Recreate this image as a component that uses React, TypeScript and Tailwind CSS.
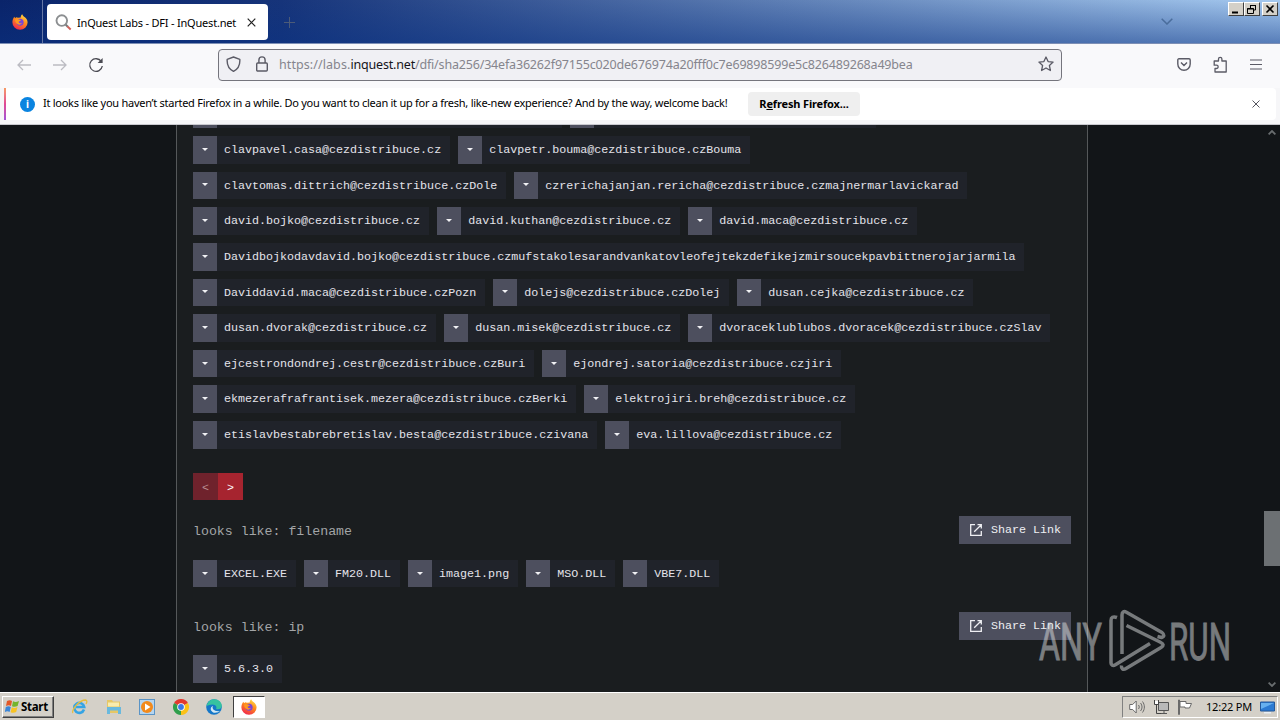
import type { ReactNode } from 'react';

const emailRows = [
  ['clavpavel.casa@cezdistribuce.cz', 'clavpetr.bouma@cezdistribuce.czBouma'],
  [
    'clavtomas.dittrich@cezdistribuce.czDole',
    'czrerichajanjan.rericha@cezdistribuce.czmajnermarlavickarad',
  ],
  ['david.bojko@cezdistribuce.cz', 'david.kuthan@cezdistribuce.cz', 'david.maca@cezdistribuce.cz'],
  [
    'Davidbojkodavdavid.bojko@cezdistribuce.czmufstakolesarandvankatovleofejtekzdefikejzmirsoucekpavbittnerojarjarmila',
  ],
  ['Daviddavid.maca@cezdistribuce.czPozn', 'dolejs@cezdistribuce.czDolej', 'dusan.cejka@cezdistribuce.cz'],
  ['dusan.dvorak@cezdistribuce.cz', 'dusan.misek@cezdistribuce.cz', 'dvoraceklublubos.dvoracek@cezdistribuce.czSlav'],
  ['ejcestrondondrej.cestr@cezdistribuce.czBuri', 'ejondrej.satoria@cezdistribuce.czjiri'],
  ['ekmezerafrafrantisek.mezera@cezdistribuce.czBerki', 'elektrojiri.breh@cezdistribuce.cz'],
  ['etislavbestabrebretislav.besta@cezdistribuce.czivana', 'eva.lillova@cezdistribuce.cz'],
];

const files = ['EXCEL.EXE', 'FM20.DLL', 'image1.png', 'MSO.DLL', 'VBE7.DLL'];

function Chip({ children }: { children: ReactNode }) {
  return (
    <div className="flex h-full shrink-0 bg-[#20232a]">
      <button className="flex w-6 items-center justify-center bg-[#4d4f5e]">
        <svg width="6" height="3" viewBox="0 0 6 3" className="mb-px">
          <path d="M0 0h6L3 3z" fill="#f1f1f4" />
        </svg>
      </button>
      <span className="flex items-center whitespace-pre pl-[7px] pr-[9px] pt-0.5 text-[11.680px] leading-none text-[#e4e4ea]">
        {children}
      </span>
    </div>
  );
}

function ChipRow({ items }: { items: string[] }) {
  return (
    <div className="flex h-[27.65px] gap-2">
      {items.map((item) => (
        <Chip key={item}>{item}</Chip>
      ))}
    </div>
  );
}

function SectionHeader({ title }: { title: string }) {
  return (
    <div className="flex h-[28px] items-center justify-between">
      <h2 className="whitespace-pre pt-[3px] text-[13.25px] leading-none text-[#a3a5a7]">{title}</h2>
      <button className="flex h-full w-[112px] items-center bg-[#4d4f5e] pl-[11px] text-[11.680px] text-[#efeff3]">
        <svg width="12" height="12" viewBox="0 0 12 12" fill="none" stroke="currentColor" strokeWidth="1.3" className="mr-[9px]">
          <path d="M5 .7H.7v10.6h10.6V7M7.5.7h3.8v3.8M11.3.7 4.2 7.8" />
        </svg>
        <span className="pt-0.5">Share Link</span>
      </button>
    </div>
  );
}

function FirefoxIcon({ size }: { size: number }) {
  return (
    <svg width={size} height={size} viewBox="0 0 16 16">
      <defs>
        <linearGradient id="fox" x1=".8" y1="0" x2=".3" y2="1">
          <stop offset="0" stopColor="#ffe14a" />
          <stop offset=".45" stopColor="#ff8a1c" />
          <stop offset="1" stopColor="#f0254f" />
        </linearGradient>
      </defs>
      <path
        d="M10.2.3c.3 1.2 1.3 1.9 2.3 2.8 1.8 1.4 3.1 3 3.1 5.4A7.6 7.4 0 1 1 .4 8.300C.4 6 1.200 4 2.500 2.700l.5 1.600 1.300-1 1.600.5 2.800-.4C8.800 2 9.400.9 10.200.3z"
        fill="url(#fox)"
      />
      <circle cx="8.100" cy="8.300" r="3.500" fill="#7a45d8" />
      <path d="M3 5.500c1.500-.9 3.300-.7 4.600.3l1.400.4c-.5.900-1.700.9-2.400 1.500.2 1.400 2 2 3.400 1.100-.8 2-3.700 2.500-5.300.8C3.600 8.500 3 7 3 5.500z" fill="#ff9a20" />
    </svg>
  );
}

function TitleBar() {
  return (
    <div className="flex h-[44px] border-b border-[#7d8fb5] bg-[linear-gradient(to_bottom,rgba(10,36,106,0)_0%,rgba(10,50,130,0.5)_100%),linear-gradient(to_right,#0a246a_0%,#16347a_22%,#a6caf0_100%)]">
      <div className="flex w-[43px] items-center border-r border-[#6577a5] pl-3">
        <FirefoxIcon size={16} />
      </div>
      <div className="ml-1 mt-1 flex h-9 w-[221px] items-center rounded bg-white pl-2">
        <svg width="17" height="17" viewBox="0 0 17 17" fill="none">
          <circle cx="6.800" cy="6.600" r="5.300" stroke="#8c8f91" strokeWidth="1.900" />
          <path d="m10.800 10.800 2 2" stroke="#777" strokeWidth="2" />
          <path d="m12.500 12.500 3.200 3" stroke="#d1605a" strokeWidth="2" />
        </svg>
        <span className="ml-[5px] w-[165px] whitespace-nowrap pt-0.5 font-['Noto_Sans'] text-[11px] tracking-[-0.2px] text-black">
          InQuest Labs - DFI - InQuest.net
        </span>
        <svg width="9" height="9" viewBox="0 0 9 9" className="ml-[5px]" stroke="#222" strokeWidth="1.200">
          <path d="m.7.7 7.600 7.600M8.300.7.7 8.300" />
        </svg>
      </div>
      <svg width="11" height="11" viewBox="0 0 11 11" className="ml-4 mt-[17px]" stroke="#4c5b78">
        <path d="M5.500 0v11M0 5.500h11" />
      </svg>
      <svg width="12" height="7" viewBox="0 0 12 7" className="ml-auto mr-[55px] mt-[18px]" fill="none" stroke="#4a6d9c" strokeWidth="1.500">
        <path d="m.7.7 5.300 5.300L11.300.7" />
      </svg>
      <div className="mr-0.5 mt-0.5 flex h-[14px]">
        <WindowButton>
          <path d="M3 9.500h6" strokeWidth="2" />
        </WindowButton>
        <WindowButton>
          <path d="M5 2.500h6M5.500 2v3M10.500 2v5H9M2.500 5.500h6v5h-6zM2 6h7" />
        </WindowButton>
        <div className="w-0.5" />
        <WindowButton>
          <path d="m3.500 2.500 7 7M10.500 2.500l-7 7" strokeWidth="1.600" />
        </WindowButton>
      </div>
    </div>
  );
}

function WindowButton({ children }: { children: ReactNode }) {
  return (
    <button className="h-[14px] w-4 border border-b-[#404040] border-l-white border-r-[#404040] border-t-white bg-[#d4d0c8]">
      <svg width="14" height="12" viewBox="0 0 14 12" fill="none" stroke="#000">
        {children}
      </svg>
    </button>
  );
}

function Toolbar() {
  return (
    <div className="flex h-11 items-center bg-[#f9f9fb] text-[#5b5b66]">
      <svg width="14" height="12" viewBox="0 0 14 12" className="-mt-0.5 ml-[17px]" fill="none" stroke="#bcbcc2" strokeWidth="1.300">
        <path d="M14 6H1M6 1 1 6l5 5" />
      </svg>
      <svg width="14" height="12" viewBox="0 0 14 12" className="-mt-0.5 ml-[22px]" fill="none" stroke="#bcbcc2" strokeWidth="1.300">
        <path d="M0 6h13M8 1l5 5-5 5" />
      </svg>
      <svg width="16" height="16" viewBox="0 0 16 16" className="-mt-0.5 ml-[21px]" fill="none" stroke="#4a4a52" strokeWidth="1.300">
        <path d="M13.300 4.500A6.300 6.300 0 1 0 14.300 9" />
        <path d="M14.600 1v5h-5z" fill="#4a4a52" stroke="none" />
      </svg>
      <div className="-mt-0.5 ml-[114px] flex h-8 w-[844px] items-center rounded border border-[#75757d] bg-[#f0f0f4]">
        <svg width="15" height="17" viewBox="0 0 15 17" className="-mt-px ml-[7px]" fill="none" stroke="currentColor" strokeWidth="1.400">
          <path d="M7.500 1 13.800 3.300c.4 5.500-1.600 9.700-6.300 12C2.800 13 .8 8.800 1.200 3.300z" strokeLinejoin="round" />
        </svg>
        <svg width="12" height="16" viewBox="0 0 12 16" className="-mt-0.5 ml-[15px]" fill="none" stroke="currentColor" strokeWidth="1.400">
          <rect x=".7" y="7" width="10.600" height="8" rx="1" />
          <path d="M2.900 7V4a3.100 3.100 0 0 1 6.200 0v3" />
        </svg>
        <span className="ml-[11px] w-[759px] whitespace-nowrap font-['Noto_Sans'] text-[12.500px] tracking-[-0.18px] text-[#85858d]">
          <span className="tracking-[0.08px]">https://labs.</span>
          <span className="text-[#15141a]">inquest.net</span>
          /dfi/sha256/34efa36262f97155c020de676974a20fff0c7e69898599e5c826489268a49bea
        </span>
        <svg width="16" height="16" viewBox="0 0 16 16" className="-mt-0.5" fill="none" stroke="currentColor" strokeWidth="1.300" strokeLinejoin="round">
          <path d="m8 1 2.100 4.600 5 .5-3.700 3.400 1 5L8 12l-4.400 2.500 1-5L.9 6.100l5-.5z" />
        </svg>
      </div>
      <svg width="14" height="13" viewBox="0 0 14 13" className="-mt-1 ml-[115px]" fill="none" stroke="currentColor" strokeWidth="1.400">
        <path d="M2 .8h10c.8 0 1.200.5 1.200 1.200V6a6.200 6.200 0 0 1-12.400 0V2C.8 1.300 1.200.8 2 .8zM4 4.500l3 3 3-3" />
      </svg>
      <svg width="15" height="17" viewBox="0 0 15 17" className="-mt-1 ml-[22px]" fill="none" stroke="currentColor" strokeWidth="1.300" strokeLinejoin="round">
        <path d="M2 16V12.500h1.500a1.600 1.600 0 0 0 0-3.300H1.200V5H5.500V3a1.700 1.700 0 0 1 3.400 0v2h4.300v11z" />
      </svg>
      <svg width="12" height="11" viewBox="0 0 12 11" className="-mt-1 ml-[22px]" stroke="currentColor" strokeWidth="1.200">
        <path d="M0 1h12M0 5.500h12M0 10h12" />
      </svg>
    </div>
  );
}

function Notification() {
  return (
    <div className="h-[37px] border-b border-[#c9c9cf] bg-[#f6f6f8] pl-1 pr-1">
      <div className="flex h-8 items-center rounded bg-white font-['Noto_Sans'] text-black">
        <div className="h-full w-0.5 bg-gradient-to-b from-[#f79a62] via-[#e04794] to-[#a352d6]" />
        <div className="ml-[14px] flex size-[15px] items-center justify-center rounded-full bg-[#0a84e0] text-[10px] font-bold leading-none text-white">
          i
        </div>
        <p className="-mt-px ml-2 w-[705px] whitespace-nowrap text-[11px] tracking-[-0.265px]">
          It looks like you haven’t started Firefox in a while. Do you want to clean it up for a fresh, like-new experience? And by the way, welcome back!
        </p>
        <button className="h-6 w-[112px] rounded bg-[#efefef] text-[11px] font-bold tracking-[-0.15px]">
          R<span className="underline">e</span>fresh Firefox...
        </button>
        <svg width="8" height="8" viewBox="0 0 8 8" className="ml-auto mr-4" stroke="#55555e">
          <path d="m.5.5 7 7M7.500.5l-7 7" />
        </svg>
      </div>
    </div>
  );
}

function Watermark() {
  return (
    <svg
      width="200"
      height="80"
      viewBox="0 0 200 80"
      className="absolute left-[1035px] top-[480px] overflow-visible opacity-50"
      fill="#dcdfe0"
      stroke="#dcdfe0"
      fontFamily="Roboto, sans-serif"
      fontSize="52"
    >
      <text x="4" y="54.500" textLength="63" lengthAdjust="spacingAndGlyphs" strokeWidth=".9">
        ANY
      </text>
      <text x="134" y="54.500" textLength="62" lengthAdjust="spacingAndGlyphs" strokeWidth=".9">
        RUN
      </text>
      <g fill="none" strokeWidth="3.500" strokeLinejoin="round">
        <path d="M82 12.500c-4-1.500-6 0-6 3V58c0 2 2 3 4 2l35-21.500" />
        <path d="M87 49V10c0-3 2-4 4-3l36 20.500c2.500 2 2.500 4-.5 5l-4-1" />
        <path d="M91.500 20.500 125 37c4 2 4 3.500 1 5.500L91 63.500c-3 2-5 0-4.500-3" />
      </g>
    </svg>
  );
}

function Page() {
  return (
    <main className="relative flex h-[567px] overflow-hidden bg-[#121518] font-['Liberation_Mono',monospace]">
      <div className="ml-[176px] h-full w-[912px] border-x border-[#55585a] bg-[#1a1d1f] px-4">
        {/* tail of the row scrolled under the toolbar */}
        <div className="flex h-[3px] gap-2">
          <div className="w-[369px] bg-[#20232a]">
            <div className="h-full w-6 bg-[#4d4f5e]" />
          </div>
          <div className="w-[306px] bg-[#20232a]">
            <div className="h-full w-6 bg-[#4d4f5e]" />
          </div>
        </div>
        <div className="mt-2 flex flex-col gap-2">
          {emailRows.map((row) => (
            <ChipRow key={row[0]} items={row} />
          ))}
        </div>

        <div className="mt-6 flex h-[27px] text-[11.680px] text-white">
          <button className="w-[25px] bg-[#6f222c] pt-1 text-[#b98d92]">&lt;</button>
          <button className="w-[25px] bg-[#a6242f] pt-1">&gt;</button>
        </div>

        <div className="mt-4">
          <SectionHeader title="looks like: filename" />
        </div>
        <div className="mt-4">
          <ChipRow items={files} />
        </div>

        <div className="mt-[24.500px]">
          <SectionHeader title="looks like: ip" />
        </div>
        <div className="mt-[15px]">
          <ChipRow items={['5.6.3.0']} />
        </div>
      </div>

      {/* Scrollbar */}
      <div className="ml-auto flex w-4 flex-col items-center text-[#696d6f]">
        <svg width="8" height="5" viewBox="0 0 8 5" className="mt-[5px]" fill="none" stroke="currentColor" strokeWidth="1.800">
          <path d="m.6 4.400 3.400-3.400 3.400 3.400" />
        </svg>
        <div className="mt-[376px] h-[55px] w-full bg-[#6c7073]" />
        <svg width="8" height="5" viewBox="0 0 8 5" className="mb-[5px] mt-auto" fill="none" stroke="currentColor" strokeWidth="1.800">
          <path d="m.6.6 3.400 3.400L7.400.6" />
        </svg>
      </div>
      <Watermark />
    </main>
  );
}

function Taskbar() {
  return (
    <footer className="flex h-[28px] items-start bg-[#d4d0c8] font-['Noto_Sans'] shadow-[inset_0_1px_0_#fff]">
      <button className="ml-0.5 mt-1 flex h-[22px] w-[52px] items-center border border-b-[#404040] border-l-white border-r-[#404040] border-t-white pl-0.5 text-[11.500px] font-bold tracking-[-0.300px] text-black shadow-[inset_-1px_-1px_0_#808080]">
        <svg width="15" height="15" viewBox="0 0 15 15" className="-mt-0.5 mr-px">
          <path d="M2 2c2-1 3.500-1 5 0L6 7C4.500 6 3 6 1 7z" fill="#e25828" />
          <path d="M8 2.300c2 1 3.500.8 6-.3l-1.400 5C10.500 8 9 8 7 7.200z" fill="#74b42c" />
          <path d="M.8 8C2.800 7 4.300 7 5.800 8l-1.200 5C3 12 1.600 12-.2 13z" fill="#3a86d8" />
          <path d="M6.800 8.300c2 1 3.500.8 5.700-.2l-1.300 5C9 14 7.600 14 5.600 13.200z" fill="#f8c323" />
        </svg>
        Start
      </button>
      <div className="ml-[17px] mt-[7px] flex items-center gap-[17.500px]">
        {/* Internet Explorer */}
        <svg width="17" height="16" viewBox="0 0 17 16" fill="none">
          <path d="M13 10.500A5 5 0 1 1 13.200 8H5" stroke="#35a4e4" strokeWidth="2.600" />
          <path d="M2 14C-.5 12 8 1 14.500 1c2 .3 1.500 2.500.5 4" stroke="#e6bd3e" strokeWidth="1.300" />
        </svg>
        {/* Explorer */}
        <svg width="16" height="16" viewBox="0 0 16 16">
          <path d="M1 1h5l1 1.500h7V14H1z" fill="#e6c766" />
          <path d="M2 3.500h11v4H2z" fill="#f8ecae" />
          <path d="M1 8h14v7h-3v-3.500H4V15H1z" fill="#69b9de" />
        </svg>
        {/* Media Player */}
        <svg width="16" height="16" viewBox="0 0 16 16">
          <rect x=".5" y=".5" width="15" height="15" fill="#b5d5f0" stroke="#5a94c6" />
          <circle cx="8" cy="8" r="6" fill="#f28a1c" />
          <path d="M6 4.500 11.500 8 6 11.500z" fill="#fff" />
        </svg>
        {/* Chrome */}
        <svg width="16" height="16" viewBox="0 0 16 16">
          <path d="M8 8 1.070 4A8 8 0 0 1 14.930 4z" fill="#e2392f" />
          <path d="M8 8 14.930 4A8 8 0 0 1 8 16z" fill="#fbc116" />
          <path d="M8 8v8A8 8 0 0 1 1.070 4z" fill="#2f9e4b" />
          <circle cx="8" cy="8" r="3.800" fill="#fff" />
          <circle cx="8" cy="8" r="2.900" fill="#3b78e7" />
        </svg>
        {/* Edge */}
        <svg width="16" height="16" viewBox="0 0 16 16">
          <circle cx="8" cy="8" r="7.800" fill="#1577c8" />
          <path d="M.5 7C1.500 2.500 5 0 8.500.2c4 0 7.300 3 7.300 6.500 0 3-3 4-5.800 3.300 1.400-1.300 0-4.500-3.500-4.500C3.500 5.500 1 7 .5 7z" fill="#36c3a0" />
          <path d="M7 7c-1.500 2.500 1 6 7.500 5-2 1-6.500 3.500-9 0C4 10 5 7.500 7 7z" fill="#d4e9f4" />
        </svg>
      </div>
      <div className="ml-[11px] mt-1 flex h-[22px] w-8 items-center justify-center border border-b-white border-l-[#404040] border-r-white border-t-[#404040] bg-white">
        <FirefoxIcon size={16} />
      </div>
      <div className="ml-auto mr-0.5 mt-1 flex h-[22px] w-[156px] items-center border border-b-white border-l-[#808080] border-r-white border-t-[#808080] pl-[6px]">
        <svg width="16" height="14" viewBox="0 0 16 14" fill="none" stroke="#6a6a6a">
          <path d="M.7 4.500h3l3.500-3.500v12L3.700 9.500h-3z" fill="#fff" />
          <path d="M9.500 5c1 1.500 1 2.500 0 4M11.500 3c2 2.500 2 5.500 0 8M13.500 1.500c2.500 3.500 2.500 7.500 0 11" />
        </svg>
        <svg width="16" height="16" viewBox="0 0 16 16" className="ml-2" fill="none" stroke="#555">
          <path d="M5.500 3.500h10v8h-10zM8 14.500h6M11 12v2" fill="#b9b9b9" />
          <path d="M1.500 1v4.500h4V1M3.500 6v8.500H8" stroke="#444" />
          <path d="M2 2h3v3H2z" fill="#fff" stroke="none" />
        </svg>
        <svg width="16" height="16" viewBox="0 0 16 16" className="ml-2" fill="#fff" stroke="#6a6a6a">
          <path d="M1.500 1v14.500h1V1zM3 2.500h6v2h5.500l-2 4.500H8V8H3z" />
        </svg>
        <span className="ml-[13px] w-[46px] whitespace-nowrap text-[11px] tracking-[-0.200px] text-black">12:22 PM</span>
        <svg width="15" height="13" viewBox="0 0 15 13" className="ml-[8px]">
          <path d="M.5 1h14v9h-14z" fill="#2b7ad2" stroke="#24599b" />
          <path d="M1 2h13L1 8z" fill="#66b0ef" />
          <path d="M4 11h7v1.500H4z" fill="#e8eef4" />
        </svg>
      </div>
    </footer>
  );
}

export default function App() {
  return (
    <div className="h-[720px] w-[1280px] overflow-hidden">
      <TitleBar />
      <Toolbar />
      <Notification />
      <Page />
      <Taskbar />
    </div>
  );
}
